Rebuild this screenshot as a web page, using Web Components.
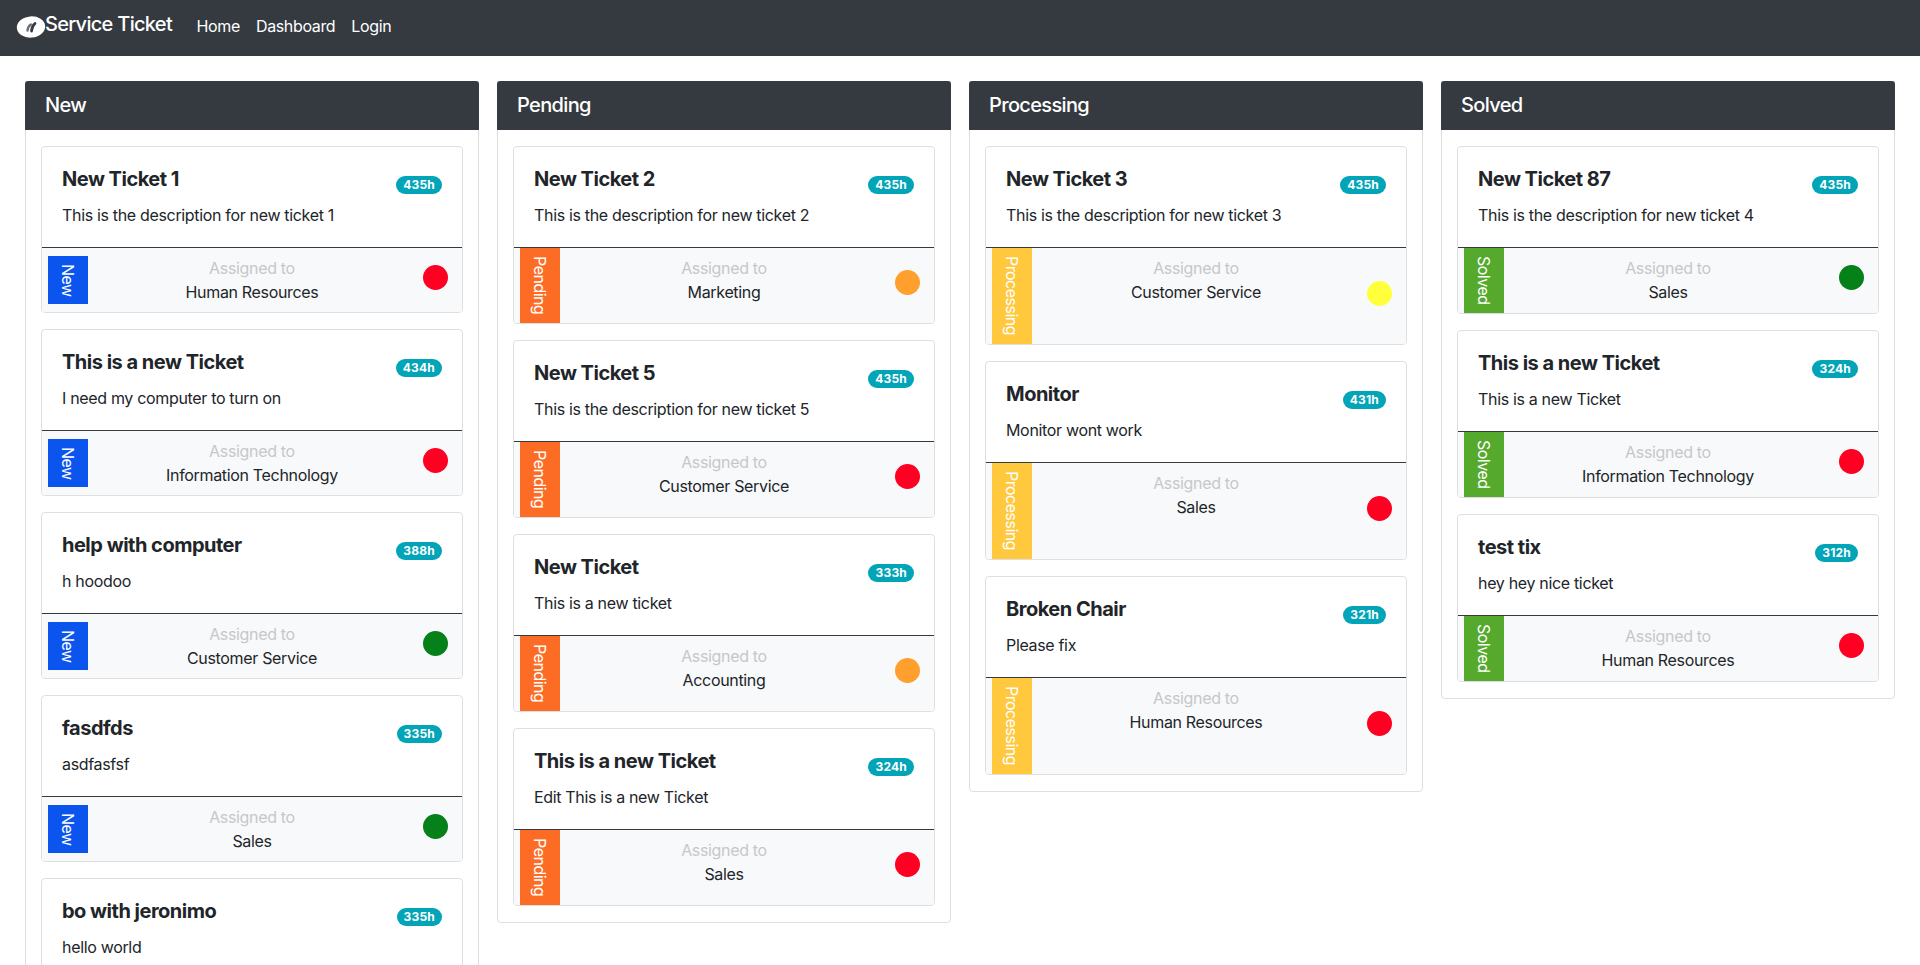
<!DOCTYPE html>
<html>
<head>
<meta charset="utf-8">
<title>Service Ticket</title>
<style>
  html, body { margin: 0; overflow: hidden; background: #fff; }
  body { font-family: Inter, "Liberation Sans", sans-serif; font-size: 16px; color: #212529; }
</style>
</head>
<body>
<app-navbar brand="Service Ticket">
  <a href="#">Home</a>
  <a href="#">Dashboard</a>
  <a href="#">Login</a>
</app-navbar>
<ticket-board id="board"></ticket-board>

<script>
// label height follows the word length in the original, kept explicit here
const STATUS_STYLES = {
  New: { bg: '#0b55ee', height: 48 },
  Pending: { bg: '#fd6c25', height: 75 },
  Processing: { bg: '#ffc83d', height: 96 },
  Solved: { bg: '#55aa2d', height: 65 },
};

const DOT_COLORS = {
  red: '#ff0022',
  green: '#068019',
  orange: '#ffa02e',
  yellow: '#ffff3b',
};

const COLUMNS = [
  { name: 'New', tickets: [
    ['New Ticket 1', 'This is the description for new ticket 1', '435h', 'Human Resources', 'red'],
    ['This is a new Ticket', 'I need my computer to turn on', '434h', 'Information Technology', 'red'],
    ['help with computer', 'h hoodoo', '388h', 'Customer Service', 'green'],
    ['fasdfds', 'asdfasfsf', '335h', 'Sales', 'green'],
    ['bo with jeronimo', 'hello world', '335h', 'Sales', 'green'],
  ] },
  { name: 'Pending', tickets: [
    ['New Ticket 2', 'This is the description for new ticket 2', '435h', 'Marketing', 'orange'],
    ['New Ticket 5', 'This is the description for new ticket 5', '435h', 'Customer Service', 'red'],
    ['New Ticket', 'This is a new ticket', '333h', 'Accounting', 'orange'],
    ['This is a new Ticket', 'Edit This is a new Ticket', '324h', 'Sales', 'red'],
  ] },
  { name: 'Processing', tickets: [
    ['New Ticket 3', 'This is the description for new ticket 3', '435h', 'Customer Service', 'yellow'],
    ['Monitor', 'Monitor wont work', '431h', 'Sales', 'red'],
    ['Broken Chair', 'Please fix', '321h', 'Human Resources', 'red'],
  ] },
  { name: 'Solved', tickets: [
    ['New Ticket 87', 'This is the description for new ticket 4', '435h', 'Sales', 'green'],
    ['This is a new Ticket', 'This is a new Ticket', '324h', 'Information Technology', 'red'],
    ['test tix', 'hey hey nice ticket', '312h', 'Human Resources', 'red'],
  ] },
];

class AppNavbar extends HTMLElement {
  connectedCallback() {
    if (this.shadowRoot) return;
    this.attachShadow({ mode: 'open' }).innerHTML = `
      <style>
        :host { display: flex; align-items: center; height: 52px; padding: 0 0 4px 16px; background: #343a40; color: #fff; }
        .brand { display: flex; align-items: center; font-size: 20px; font-weight: 500; letter-spacing: -0.7px; margin-right: 24.5px; margin-top: -4px; }
        svg { display: block; width: 30px; height: 24px; margin: 5px -1px 0 0; }
        nav { display: flex; gap: 16px; font-size: 16px; letter-spacing: -0.35px; }
        ::slotted(a) { color: #fff; text-decoration: none; }
      </style>
      <div class="brand">
        <svg viewBox="0 0 30 24">
          <defs><filter id="soft" x="-10%" y="-10%" width="120%" height="120%"><feGaussianBlur stdDeviation="0.45"/></filter></defs>
          <g filter="url(#soft)">
            <ellipse cx="15" cy="12" rx="14.2" ry="10.6" fill="#fff" transform="rotate(-4 15 12)"/>
            <path d="M11.5 15.5 Q12 11.5 14.8 9.5" fill="none" stroke="#6b7075" stroke-width="2.4" stroke-linecap="round"/>
            <path d="M15.5 16 Q16 11 19 8.5" fill="none" stroke="#343a40" stroke-width="2.8" stroke-linecap="round"/>
          </g>
        </svg>
        <span>${this.getAttribute('brand')}</span>
      </div>
      <nav><slot></slot></nav>`;
  }
}

class TicketBoard extends HTMLElement {
  connectedCallback() {
    if (this.shadowRoot) return;
    this.attachShadow({ mode: 'open' }).innerHTML = `
      <style>
        :host { display: grid; grid-template-columns: repeat(4, 454px); gap: 18px; padding: 25px 25px 0; align-items: start; }
      </style>
      <slot></slot>`;
    COLUMNS.forEach(col => {
      const column = document.createElement('ticket-column');
      column.setAttribute('name', col.name);
      col.tickets.forEach(t => {
        const card = document.createElement('ticket-card');
        card.setAttribute('title', t[0]);
        card.setAttribute('age', t[2]);
        card.setAttribute('status', col.name);
        card.setAttribute('team', t[3]);
        card.setAttribute('dot', t[4]);
        card.textContent = t[1];
        column.appendChild(card);
      });
      this.appendChild(column);
    });
  }
}

class TicketColumn extends HTMLElement {
  connectedCallback() {
    if (this.shadowRoot) return;
    this.attachShadow({ mode: 'open' }).innerHTML = `
      <style>
        :host { display: block; border: 1px solid #dfdfdf; border-radius: 4px; background: #fff; }
        header { background: #343a40; color: #fff; font-size: 20px; font-weight: 500; line-height: 24px; letter-spacing: -0.65px; padding: 12px 20px 13px; border-radius: 3px 3px 0 0; margin: -1px -1px 0; }
        .body { display: flex; flex-direction: column; gap: 16px; padding: 16px 15px; }
      </style>
      <header>${this.getAttribute('name')}</header>
      <div class="body"><slot></slot></div>`;
  }
}

class TicketCard extends HTMLElement {
  connectedCallback() {
    if (this.shadowRoot) return;
    const status = this.getAttribute('status');
    const style = STATUS_STYLES[status];
    const dot = DOT_COLORS[this.getAttribute('dot')];
    this.attachShadow({ mode: 'open' }).innerHTML = `
      <style>
        :host { display: block; border: 1px solid #dfdfdf; border-radius: 4px; background: #fff; overflow: hidden; }
        .body { padding: 20px; }
        .top { display: flex; justify-content: space-between; align-items: flex-start; height: 24px; margin-bottom: 12px; }
        h5 { margin: 0; font-size: 20px; line-height: 24px; font-weight: 700; letter-spacing: -0.5px; }
        .age { background: #02a4b8; color: #fff; font-size: 12px; line-height: 12px; font-weight: 700; letter-spacing: 0.2px; padding: 3px 7px; border-radius: 10px; margin-top: 9px; }
        p { margin: 0; line-height: 24px; letter-spacing: -0.33px; }
        footer { display: grid; grid-template-columns: 1fr auto 1fr; border-top: 1px solid #343a40; background: #f8f9fa; padding: 0 6px; min-height: 64px; }
        .status { justify-self: start; align-self: center; writing-mode: vertical-rl; width: 40px; height: ${style.height}px; line-height: 40px; text-align: center; color: #fff; background: ${style.bg}; letter-spacing: -0.5px; }
        .team { padding-top: 8px; text-align: center; letter-spacing: -0.33px; line-height: 24px; }
        .team small { display: block; font-size: 16px; color: #c5c8cb; }
        .dot { justify-self: end; align-self: center; width: 25px; height: 25px; border-radius: 50%; margin: 0 8px 6px 0; background: ${dot}; }
      </style>
      <div class="body">
        <div class="top"><h5>${this.getAttribute('title')}</h5><span class="age">${this.getAttribute('age')}</span></div>
        <p><slot></slot></p>
      </div>
      <footer>
        <div class="status">${status}</div>
        <div class="team"><small>Assigned to</small>${this.getAttribute('team')}</div>
        <div class="dot"></div>
      </footer>`;
  }
}

customElements.define('app-navbar', AppNavbar);
customElements.define('ticket-column', TicketColumn);
customElements.define('ticket-card', TicketCard);
customElements.define('ticket-board', TicketBoard);
</script>
</body>
</html>
